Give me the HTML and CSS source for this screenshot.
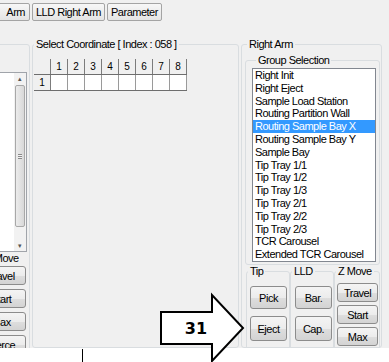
FILE: index.html
```html
<!DOCTYPE html>
<html lang="en">
  <head>
    <meta charset="UTF-8" />
    <title>Right Arm Coordinates</title>
    <link rel="stylesheet" href="styles.css">
  </head>
  <body>
    <div class="tabs">
      <div class="tab-clip">
        <button class="tab first">Arm</button>
      </div>
      <button class="tab">LLD Right Arm</button>
      <button class="tab">Parameter</button>
    </div>

    <div class="main">
      <!-- left arm panel, mostly scrolled out of view -->
      <div class="side">
        <fieldset class="group side-box">
          <div class="side-list">
            <div class="scrollbar">
              <span class="sb-arrow">&#9652;</span>
              <span class="thumb"><span class="grip"></span></span>
              <span class="sb-arrow">&#9662;</span>
            </div>
          </div>
          <div class="side-move">
            <div class="side-label">Z Move</div>
            <button class="btn side-btn">Travel</button>
            <button class="btn side-btn">Start</button>
            <button class="btn side-btn">Max</button>
            <button class="btn side-btn">Pierce</button>
          </div>
        </fieldset>
      </div>

      <fieldset class="group coord">
        <legend>Select Coordinate [ Index : 058 ]</legend>
        <table class="grid">
          <tr>
            <th></th><th>1</th><th>2</th><th>3</th><th>4</th>
            <th>5</th><th>6</th><th>7</th><th>8</th>
          </tr>
          <tr>
            <th>1</th><td></td><td></td><td></td><td></td>
            <td></td><td></td><td></td><td></td>
          </tr>
        </table>
      </fieldset>

      <fieldset class="group arm">
        <legend>Right Arm</legend>
        <fieldset class="group selection">
          <legend>Group Selection</legend>
          <ul class="listbox">
            <li>Right Init</li>
            <li>Right Eject</li>
            <li>Sample Load Station</li>
            <li>Routing Partition Wall</li>
            <li class="selected">Routing Sample Bay X</li>
            <li>Routing Sample Bay Y</li>
            <li>Sample Bay</li>
            <li>Tip Tray 1/1</li>
            <li>Tip Tray 1/2</li>
            <li>Tip Tray 1/3</li>
            <li>Tip Tray 2/1</li>
            <li>Tip Tray 2/2</li>
            <li>Tip Tray 2/3</li>
            <li>TCR Carousel</li>
            <li>Extended TCR Carousel</li>
          </ul>
        </fieldset>
        <div class="actions">
          <fieldset class="group tip">
            <legend>Tip</legend>
            <button class="btn big">Pick</button>
            <button class="btn big tall">Eject</button>
          </fieldset>
          <fieldset class="group lld">
            <legend>LLD</legend>
            <button class="btn big">Bar.</button>
            <button class="btn big tall">Cap.</button>
          </fieldset>
          <fieldset class="group zmove">
            <legend>Z Move</legend>
            <button class="btn small">Travel</button>
            <button class="btn small">Start</button>
            <button class="btn small">Max</button>
          </fieldset>
        </div>
      </fieldset>
    </div>

    <div class="status"><span class="caret"></span></div>

    <!-- step callout drawn over the form -->
    <svg class="callout" width="90" height="72" viewBox="0 0 90 72">
      <polygon points="3,22 54,22 54,5 85,38 54,71 54,54 3,54"
        fill="#fff" stroke="#000" stroke-width="2" />
      <text x="38" y="44" text-anchor="middle">31</text>
    </svg>
  </body>
</html>
```

FILE: styles.css
```css
body {
  margin: 0;
  width: 389px;
  height: 362px;
  overflow: hidden;
  position: relative;
  display: flex;
  flex-direction: column;
  background: #f0f0f0;
  font-family: "Liberation Sans", Arial, sans-serif;
  font-size: 11px;
  letter-spacing: -0.5px;
  color: #000;
}
button {
  font: inherit;
  letter-spacing: inherit;
  color: #000;
  padding: 0;
}

/* top tab buttons */
.tabs {
  height: 22px;
  flex-shrink: 0;
  display: flex;
  gap: 2px;
  padding-top: 3px;
  box-sizing: border-box;
}
.tab-clip {
  width: 30px;
  display: flex;
  justify-content: flex-end;
  overflow: hidden;
}
.tab {
  height: 18px;
  padding: 0 3px;
  white-space: nowrap;
  flex-shrink: 0;
  background: linear-gradient(#f7f7f7, #e4e4e4);
  border: 1px solid #a4a4a4;
  border-radius: 2px;
}
.tab.first {
  padding: 0 4px 0 8px;
}

.main {
  height: 326px;
  flex-shrink: 0;
  display: flex;
  overflow: hidden;
}

/* group boxes */
.group {
  margin: 0;
  padding: 0;
  min-width: 0;
  box-sizing: border-box;
  border: 1px solid #d9dde0;
  border-radius: 3px;
}
.group legend {
  padding: 0 2px;
  line-height: 13px;
  white-space: nowrap;
}

/* left panel */
.side {
  width: 30px;
  flex-shrink: 0;
  display: flex;
  justify-content: flex-end;
  align-items: flex-start;
  overflow: hidden;
}
.side-box {
  flex-shrink: 0;
  width: 120px;
  height: 320px;
  margin-top: 22px;
  padding: 27px 2px 0 0;
  display: flex;
  flex-direction: column;
  align-items: flex-end;
}
.side-list {
  flex-shrink: 0;
  width: 100px;
  height: 180px;
  box-sizing: border-box;
  border: 1px solid #a0a4aa;
  background: #fff;
  display: flex;
  justify-content: flex-end;
}
.scrollbar {
  width: 12px;
  display: flex;
  flex-direction: column;
  align-items: center;
  background: #f2f2f2;
}
.sb-arrow {
  height: 11px;
  font-size: 7px;
  line-height: 11px;
  color: #555;
}
.thumb {
  flex: 1;
  width: 10px;
  margin: 1px 0 13px;
  box-sizing: border-box;
  border: 1px solid #a8a8a8;
  border-radius: 2px;
  background: linear-gradient(to right, #ececec, #d8d8d8);
  display: flex;
  align-items: center;
  justify-content: center;
}
.grip {
  width: 4px;
  height: 5px;
  border-top: 1px solid #8a8a8a;
  border-bottom: 1px solid #8a8a8a;
  box-sizing: border-box;
  background: linear-gradient(#f2f2f2 40%, #8a8a8a 40%, #8a8a8a 60%, #f2f2f2 60%);
}
.side-move {
  flex-shrink: 0;
  width: 50px;
  display: flex;
  flex-direction: column;
  gap: 4px;
  margin-right: 1px;
}
.side-label {
  line-height: 13px;
  padding-left: 9px;
  margin-bottom: -3px;
  white-space: nowrap;
}
.side-btn {
  height: 19px;
  flex-shrink: 0;
}

/* coordinate grid */
.coord {
  width: 207px;
  flex-shrink: 0;
  margin: 16px 0 0 2px;
  padding: 8px 0 0 1px;
}
.grid {
  border-collapse: collapse;
  font-size: 10px;
  letter-spacing: 0;
}
.grid th,
.grid td {
  width: 16px;
  height: 15px;
  padding: 0;
  text-align: center;
  font-weight: normal;
}
.grid th {
  background: #f0f0f0;
  border-right: 1px solid #7c7c7c;
  border-bottom: 1px solid #6e6e6e;
}
.grid td {
  background: #fff;
  border-right: 1px solid #9a9a9a;
  border-bottom: 1px solid #6e6e6e;
}

/* right arm panel */
.arm {
  width: 141px;
  flex-shrink: 0;
  margin: 16px 0 0 2px;
  padding: 0 0 0 3px;
}
.arm > legend {
  margin-left: 2px;
}
.selection {
  width: 135px;
  margin-top: 3px;
  padding: 1px 2px 2px 6px;
}
.selection legend {
  margin-left: 4px;
}
.listbox {
  list-style: none;
  margin: 0;
  padding: 0;
  width: 124px;
  height: 194px;
  box-sizing: border-box;
  border: 1px solid #828790;
  background: #fff;
  overflow: hidden;
}
.listbox li {
  line-height: 12.8px;
  padding-left: 2px;
  white-space: nowrap;
}
.listbox .selected {
  background: #3399ff;
  color: #fff;
}

.actions {
  display: flex;
  margin-left: 1px;
  height: 90px;
}
.actions .group {
  display: flex;
  flex-direction: column;
}
.tip {
  width: 44px;
  padding: 8px 0 0 3px;
  gap: 7px;
}
.tip legend {
  margin-left: -2px;
}
.lld {
  width: 44px;
  padding: 8px 0 0 4px;
  gap: 7px;
}
.lld legend {
  margin-left: -3px;
}
.zmove {
  width: 46px;
  padding: 5px 0 0 2px;
  gap: 3px;
}
.zmove legend {
  margin-left: -1px;
}

/* push buttons */
.btn {
  background: linear-gradient(#f4f4f4 0%, #ececec 50%, #dedede 51%, #d3d3d3 100%);
  border: 1px solid #8c8c8c;
  border-radius: 3px;
  white-space: nowrap;
}
.big {
  width: 37px;
  height: 23px;
}
.big.tall {
  height: 25px;
}
.small {
  width: 41px;
  height: 19px;
}

/* bottom strip */
.status {
  flex: 1;
  background: #fff;
}
.caret {
  display: block;
  width: 1px;
  height: 13px;
  margin: 1px 0 0 82px;
  background: #000;
}

.callout {
  position: absolute;
  left: 158px;
  top: 290px;
}
.callout text {
  font-family: "DejaVu Sans", sans-serif;
  font-weight: bold;
  font-size: 16px;
  letter-spacing: 0;
}
```
